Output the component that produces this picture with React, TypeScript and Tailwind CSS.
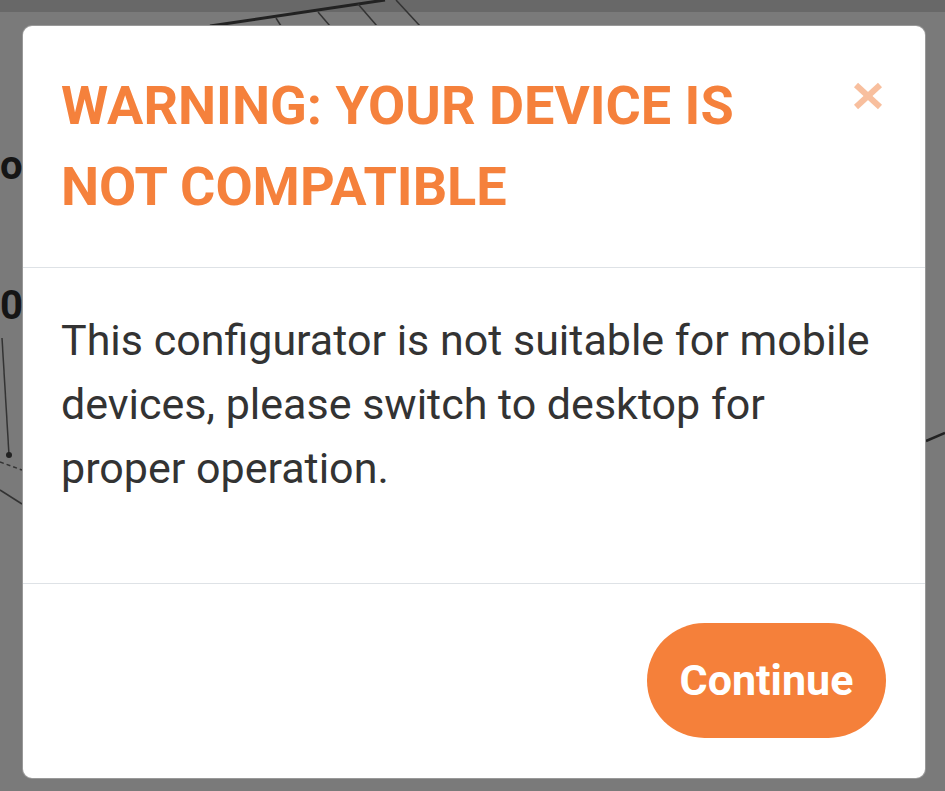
export default function App() {
  return (
    <div className="relative h-[791px] w-[945px] overflow-hidden bg-[#7a7a7a] font-[Roboto,sans-serif]">
      {/* page content behind the dimmed overlay */}
      <div className="absolute inset-0">
        <div className="h-[12px] w-full bg-[#686868]" />
        <svg className="absolute left-0 top-0" width="945" height="791" viewBox="0 0 945 791">
          <line x1="210" y1="26" x2="385" y2="0" stroke="#222" strokeWidth="3" />
          <line x1="276" y1="18" x2="281" y2="26" stroke="#333" strokeWidth="1.5" />
          <line x1="318" y1="12" x2="330" y2="26" stroke="#333" strokeWidth="1.5" />
          <line x1="358" y1="4" x2="377" y2="26" stroke="#333" strokeWidth="1.5" />
          <line x1="396" y1="0" x2="420" y2="26" stroke="#333" strokeWidth="1.5" />
          <line x1="2" y1="338" x2="9" y2="455" stroke="#333" strokeWidth="1.5" />
          <circle cx="9" cy="455" r="3" fill="#222" />
          <line x1="0" y1="462" x2="22" y2="470" stroke="#333" strokeWidth="1.5" strokeDasharray="4 3" />
          <line x1="0" y1="490" x2="22" y2="504" stroke="#333" strokeWidth="1.5" />
          <line x1="926" y1="441" x2="945" y2="433" stroke="#222" strokeWidth="2.5" />
        </svg>
        <span className="absolute left-0 top-[142px] text-[40px] font-bold leading-[48px] text-[#151515]">om</span>
        <span className="absolute left-0 top-[282px] text-[40px] font-bold leading-[48px] text-[#151515]">0</span>
      </div>

      {/* modal */}
      <div className="relative pl-[22px] pt-[25px]">
        <div className="w-[904px] overflow-hidden rounded-[10px] border border-black/40 bg-white">
          <div className="flex items-start justify-between border-b border-[#dee2e6] pb-[40px] pl-[38px] pr-[41px] pt-[39px]">
            <h5 className="text-[54px] font-bold leading-[81px] text-[#f5813c]">
              WARNING: YOUR DEVICE IS
              <br />
              NOT COMPATIBLE
            </h5>
            <button className="mt-[17px] flex h-[28px] w-[32px] items-center justify-center" aria-label="Close">
              <svg width="32" height="28" viewBox="0 0 32 28">
                <line x1="4" y1="3" x2="28" y2="25" stroke="#f8bf9e" strokeWidth="6" />
                <line x1="28" y1="3" x2="4" y2="25" stroke="#f8bf9e" strokeWidth="6" />
              </svg>
            </button>
          </div>
          <div className="pb-[40px] pl-[38px] pr-[40px] pt-[40px]">
            <p className="mb-[43px] text-[43px] leading-[64px] text-[#333333]">
              This configurator is not suitable for mobile devices, please switch to desktop for proper operation.
            </p>
          </div>
          <div className="flex justify-end border-t border-[#dee2e6] pb-[40px] pl-[40px] pr-[39px] pt-[39px]">
            <button className="flex h-[115px] w-[239px] items-center justify-center rounded-full bg-[#f5803a] text-[43px] font-bold text-white">
              Continue
            </button>
          </div>
        </div>
      </div>
    </div>
  );
}
